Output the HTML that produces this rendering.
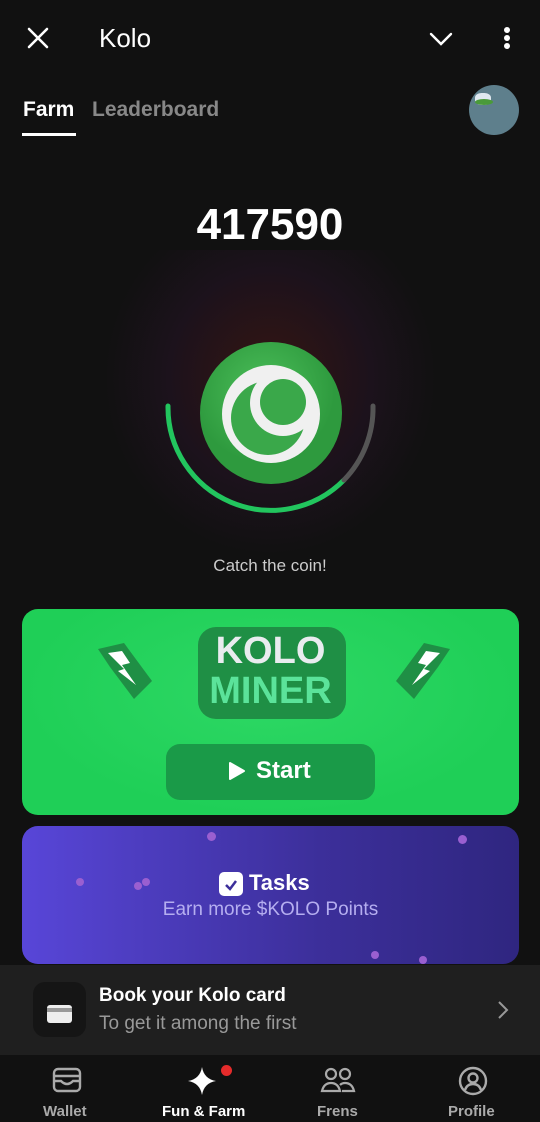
<!DOCTYPE html>
<html><head><meta charset="utf-8"><style>
*{margin:0;padding:0;box-sizing:border-box}
body{width:540px;height:1122px;background:#111111;font-family:"Liberation Sans",sans-serif;color:#fff;position:relative;overflow:hidden}
.abs{position:absolute}
</style></head><body>
<svg class="abs" style="left:27px;top:27px" width="22" height="22" viewBox="0 0 22 22"><path d="M2 2L20 20M20 2L2 20" stroke="#fff" stroke-width="2.6" stroke-linecap="round"/></svg>
<div class="abs" style="left:99px;top:23px;font-size:26px;">Kolo</div>
<svg class="abs" style="left:429px;top:31px" width="24" height="16" viewBox="0 0 24 16"><path d="M2 3L12 13L22 3" stroke="#fff" stroke-width="2.4" fill="none" stroke-linecap="round"/></svg>
<div class="abs" style="left:504px;top:27px;width:6px;height:6px;border-radius:50%;background:#fff"></div>
<div class="abs" style="left:504px;top:35px;width:6px;height:6px;border-radius:50%;background:#fff"></div>
<div class="abs" style="left:504px;top:43px;width:6px;height:6px;border-radius:50%;background:#fff"></div>
<div class="abs" style="left:23px;top:98px;font-size:21px;font-weight:bold">Farm</div>
<div class="abs" style="left:22px;top:133px;width:54px;height:3px;background:#fff"></div>
<div class="abs" style="left:92px;top:98px;font-size:21px;font-weight:bold;color:#888">Leaderboard</div>
<div class="abs" style="left:469px;top:85px;width:50px;height:50px;border-radius:50%;background:#5e7f8c;overflow:hidden"><div style="position:absolute;left:6px;top:8px;width:16px;height:12px;background:#dfe8f0;border-radius:40%"></div><div style="position:absolute;left:6px;top:14px;width:18px;height:6px;background:#4a9a3a;border-radius:50%"></div></div>
<div class="abs" style="left:0;width:540px;top:200px;text-align:center;font-size:44px;font-weight:bold">417590</div>
<div class="abs" style="left:90px;top:250px;width:360px;height:320px;background:radial-gradient(ellipse at 50% 40%,rgba(120,30,20,.35),rgba(60,20,60,.25) 40%,rgba(17,17,17,0) 65%)"></div>
<svg class="abs" style="left:0;top:300px" width="540" height="240" viewBox="0 300 540 240">
<defs><radialGradient id="g" cx="45%" cy="35%"><stop offset="0" stop-color="#4cbf5a"/><stop offset="1" stop-color="#2e9a3e"/></radialGradient></defs>
<path d="M168 406 A103 103 0 0 0 344 480" stroke="#22c55e" stroke-width="5" fill="none" stroke-linecap="round"/>
<path d="M344 480 A103 103 0 0 0 373 406" stroke="#555" stroke-width="5" fill="none" stroke-linecap="round"/>
<circle cx="271" cy="413" r="71" fill="url(#g)"/>
<circle cx="271" cy="414" r="49" fill="#f0f0f0"/>
<circle cx="268" cy="418" r="37" fill="#3aa84a"/>
<circle cx="283" cy="403" r="33" fill="#f0f0f0"/>
<circle cx="283" cy="402" r="23" fill="#3aa84a"/>
</svg>
<div class="abs" style="left:0;width:540px;top:556px;text-align:center;font-size:17px;color:#ccc">Catch the coin!</div>
<div class="abs" style="left:22px;top:609px;width:497px;height:206px;border-radius:16px;background:radial-gradient(ellipse at 50% 40%,#2ed865,#1fcf57 70%);overflow:hidden">
<div class="abs" style="left:176px;top:18px;width:148px;height:92px;background:#1f8f45;border-radius:18px"></div>
<div class="abs" style="left:0;width:497px;top:22px;text-align:center;font-size:38px;font-weight:900;color:#e9ecef;line-height:40px">KOLO</div>
<div class="abs" style="left:0;width:497px;top:62px;text-align:center;font-size:38px;font-weight:900;color:#5be39a;line-height:40px">MINER</div>
<svg class="abs" style="left:68px;top:28px" width="70" height="70" viewBox="0 0 70 70"><path d="M8 12 L34 6 L62 44 L44 62 L20 30Z" fill="#1f8f45"/><path d="M18 16L32 14L40 26L32 28L46 48L28 34L34 32Z" fill="#fff"/></svg>
<svg class="abs" style="left:366px;top:28px" width="70" height="70" viewBox="0 0 70 70"><path d="M62 12 L36 6 L8 44 L26 62 L50 30Z" fill="#1f8f45"/><path d="M52 16L38 14L30 26L38 28L24 48L42 34L36 32Z" fill="#fff"/></svg>
<div class="abs" style="left:144px;top:135px;width:209px;height:56px;border-radius:14px;background:#1a9a48"></div>
<svg class="abs" style="left:206px;top:152px" width="18" height="20" viewBox="0 0 18 20"><path d="M2 2L16 10L2 18Z" fill="#fff" stroke="#fff" stroke-width="2" stroke-linejoin="round"/></svg>
<div class="abs" style="left:234px;top:148px;font-size:24px;font-weight:bold">Start</div>
</div>
<div class="abs" style="left:22px;top:826px;width:497px;height:138px;border-radius:16px;background:linear-gradient(90deg,#5846d8,#3c2f9a 60%,#2f2680);overflow:hidden">
<div class="abs" style="left:185px;top:6px;width:9px;height:9px;border-radius:50%;background:#9a5fd0"></div>
<div class="abs" style="left:436px;top:9px;width:9px;height:9px;border-radius:50%;background:#9a5fd0"></div>
<div class="abs" style="left:54px;top:52px;width:8px;height:8px;border-radius:50%;background:#9a5fd0"></div>
<div class="abs" style="left:112px;top:56px;width:8px;height:8px;border-radius:50%;background:#9a5fd0"></div>
<div class="abs" style="left:120px;top:52px;width:8px;height:8px;border-radius:50%;background:#9a5fd0"></div>
<div class="abs" style="left:349px;top:125px;width:8px;height:8px;border-radius:50%;background:#9a5fd0"></div>
<div class="abs" style="left:397px;top:130px;width:8px;height:8px;border-radius:50%;background:#9a5fd0"></div>
<div class="abs" style="left:197px;top:46px;width:24px;height:24px;border-radius:5px;background:#fff"></div>
<svg class="abs" style="left:201px;top:52px" width="16" height="14" viewBox="0 0 16 14"><path d="M3 7L7 11L13 3" stroke="#3c2f9a" stroke-width="2.5" fill="none"/></svg>
<div class="abs" style="left:227px;top:44px;font-size:22px;font-weight:bold">Tasks</div>
<div class="abs" style="left:0;width:497px;top:73px;text-align:center;font-size:19px;color:#b5aef0">Earn more $KOLO Points</div>
</div>
<div class="abs" style="left:0;top:965px;width:540px;height:90px;background:#1f1f1f">
<div class="abs" style="left:33px;top:17px;width:53px;height:55px;border-radius:12px;background:#151515"></div>
<div class="abs" style="left:47px;top:40px;width:25px;height:18px;border-radius:3px;background:#eee"></div>
<div class="abs" style="left:47px;top:43px;width:25px;height:4px;background:#999"></div>
<div class="abs" style="left:99px;top:20px;font-size:19px;font-weight:bold">Book your Kolo card</div>
<div class="abs" style="left:99px;top:48px;font-size:19px;color:#999">To get it among the first</div>
<svg class="abs" style="left:496px;top:35px" width="14" height="20" viewBox="0 0 14 20"><path d="M3 2L11 10L3 18" stroke="#999" stroke-width="2" fill="none"/></svg>
</div>
<div class="abs" style="left:0;top:1055px;width:540px;height:67px;background:#111">
<svg class="abs" style="left:52px;top:12px" width="30" height="26" viewBox="0 0 30 26"><rect x="2" y="2" width="26" height="22" rx="4" stroke="#aaa" stroke-width="2.4" fill="none"/><path d="M2 9H28M2 14H9Q15 20 21 14H28" stroke="#aaa" stroke-width="2.4" fill="none"/></svg>
<div class="abs" style="left:43px;top:48px;font-size:15px;color:#aaa;font-weight:bold">Wallet</div>
<svg class="abs" style="left:187px;top:11px" width="30" height="30" viewBox="0 0 30 30"><path d="M15 1Q17 13 29 15Q17 17 15 29Q13 17 1 15Q13 13 15 1Z" fill="#fff"/></svg>
<div class="abs" style="left:221px;top:10px;width:11px;height:11px;border-radius:50%;background:#e52b2b"></div>
<div class="abs" style="left:162px;top:48px;font-size:15px;font-weight:bold">Fun &amp; Farm</div>
<svg class="abs" style="left:320px;top:11px" width="36" height="28" viewBox="0 0 36 28"><circle cx="11" cy="8" r="5" stroke="#aaa" stroke-width="2.2" fill="none"/><circle cx="25" cy="8" r="5" stroke="#aaa" stroke-width="2.2" fill="none"/><path d="M2 25Q4 17 11 17Q18 17 20 25ZM20 19Q22 17 25 17Q32 17 34 25H22" stroke="#aaa" stroke-width="2.2" fill="none"/></svg>
<div class="abs" style="left:317px;top:48px;font-size:15px;color:#aaa;font-weight:bold">Frens</div>
<svg class="abs" style="left:457px;top:10px" width="32" height="32" viewBox="0 0 32 32"><circle cx="16" cy="16" r="13" stroke="#aaa" stroke-width="2.4" fill="none"/><circle cx="16" cy="13" r="4.5" stroke="#aaa" stroke-width="2.4" fill="none"/><path d="M8 25Q10 19 16 19Q22 19 24 25" stroke="#aaa" stroke-width="2.4" fill="none"/></svg>
<div class="abs" style="left:448px;top:48px;font-size:15px;color:#aaa;font-weight:bold">Profile</div>
</div>
</body></html>
